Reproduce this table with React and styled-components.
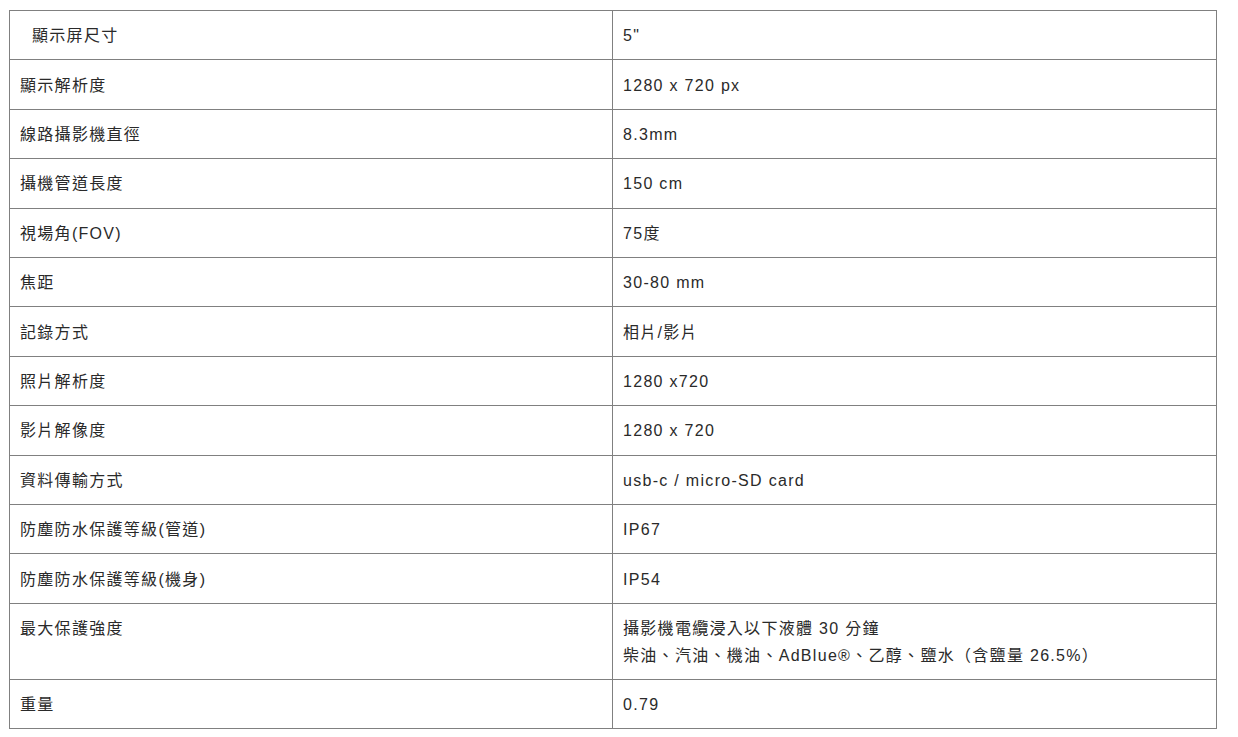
import React from "react";
import styled, { createGlobalStyle } from "styled-components";

const GlobalStyle = createGlobalStyle`
  body {
    margin: 0;
    background: #fff;
    font-family: "Liberation Sans", Arial, "Noto Sans CJK TC", sans-serif;
  }
`;

const specs = [
  { label: "顯示屏尺寸", value: ["5\""], indent: true },
  { label: "顯示解析度", value: ["1280 x 720 px"] },
  { label: "線路攝影機直徑", value: ["8.3mm"] },
  { label: "攝機管道長度", value: ["150 cm"] },
  { label: "視場角(FOV)", value: ["75度"] },
  { label: "焦距", value: ["30-80 mm"] },
  { label: "記錄方式", value: ["相片/影片"] },
  { label: "照片解析度", value: ["1280 x720"] },
  { label: "影片解像度", value: ["1280 x 720"] },
  { label: "資料傳輸方式", value: ["usb-c / micro-SD card"] },
  { label: "防塵防水保護等級(管道)", value: ["IP67"] },
  { label: "防塵防水保護等級(機身)", value: ["IP54"] },
  {
    label: "最大保護強度",
    value: [
      "攝影機電纜浸入以下液體 30 分鐘",
      "柴油、汽油、機油、AdBlue®、乙醇、鹽水（含鹽量 26.5%）",
    ],
  },
  { label: "重量", value: ["0.79"] },
];

const App = () => {
  return (
    <>
      <GlobalStyle />
      <Page>
        <SpecTable>
          <colgroup>
            <col style={{ width: "603px" }} />
            <col />
          </colgroup>
          <tbody>
            {specs.map((row) => (
              <tr key={row.label}>
                <Cell $indent={row.indent}>{row.label}</Cell>
                <Cell>
                  {row.value.map((line) => (
                    <Line key={line}>{line}</Line>
                  ))}
                </Cell>
              </tr>
            ))}
          </tbody>
        </SpecTable>
      </Page>
    </>
  );
};

const Page = styled.div`
  padding: 10px 0 0 9px;
`;

const SpecTable = styled.table`
  width: 1208px;
  border-collapse: collapse;
  table-layout: fixed;
  border: 1px solid #808080;
`;

const Cell = styled.td`
  vertical-align: top;
  border: 1px solid #808080;
  padding: 11.3px 10px 10.1px ${(p) => (p.$indent ? "22px" : "10px")};
  font-size: 16px;
  line-height: 27px;
  letter-spacing: 1.3px;
  color: #2a2a2a;
  font-family: "Liberation Sans", Arial, "Noto Sans CJK TC", sans-serif;
`;

const Line = styled.div``;

export default App;
